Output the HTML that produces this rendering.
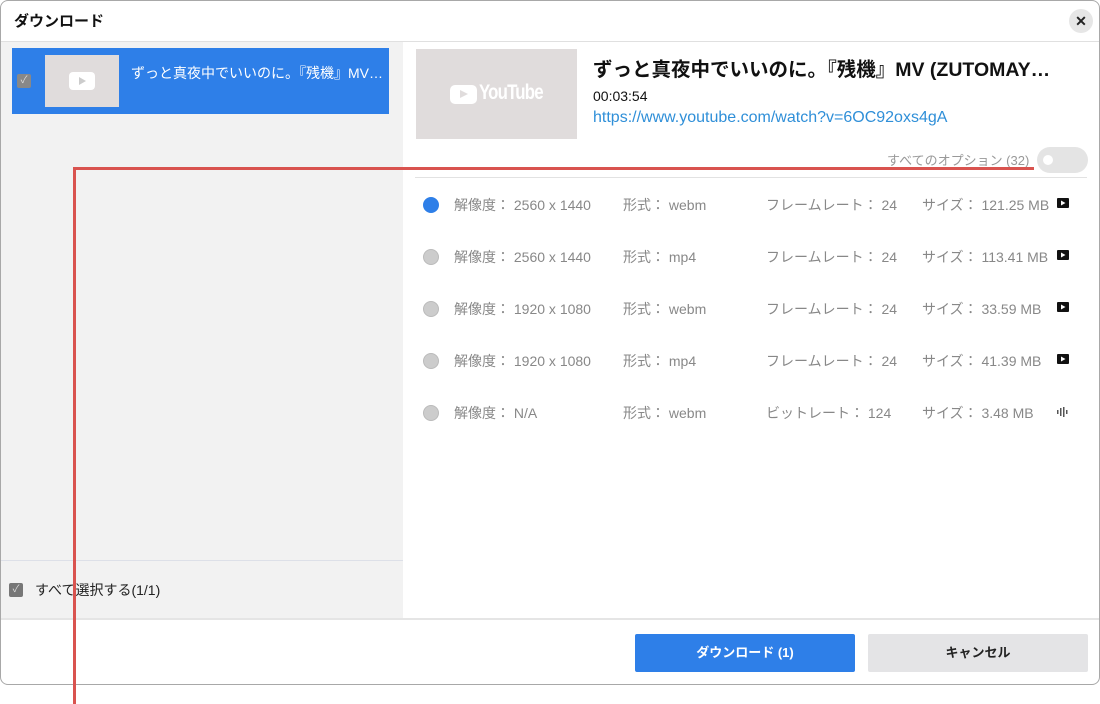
<!DOCTYPE html>
<html><head><meta charset="utf-8"><style>
*{margin:0;padding:0;box-sizing:border-box}
body{width:1100px;height:704px;background:#fff;position:relative;overflow:hidden;font-family:"Liberation Sans","Noto Sans CJK JP",sans-serif}
.win{position:absolute;left:0;top:0;width:1100px;height:685px;border:1px solid #a8a8a8;border-radius:8px;overflow:hidden;background:#fff}
.title{position:absolute;left:13px;top:9px;font-size:15px;font-weight:bold;color:#111}
.close{position:absolute;left:1068px;top:8px;width:24px;height:24px;border-radius:12px;background:#e6e6e6;text-align:center;line-height:24px;font-size:14px;font-weight:bold;color:#222}
.left{position:absolute;left:0;top:40px;width:402px;height:578px;background:#f2f2f2;border-top:1px solid #e0e0e0}
.sel{position:absolute;left:11px;top:6px;width:377px;height:66px;background:#2e7fe8}
.cb{position:absolute;width:14px;height:14px;border-radius:2px;background:#777;color:#ddd;font-size:10px;text-align:center;line-height:14px}
.thumb{position:absolute;left:33px;top:7px;width:74px;height:52px;background:#e0dcdc}
.right-div{position:absolute;left:402px;top:617px;width:698px;height:2px;background:#e5e5e5}
.row{position:absolute;left:0;font-size:14px;color:#888;height:20px}
.row span{position:absolute;white-space:nowrap;top:0}
.radio{position:absolute;left:422px;width:16px;height:16px;border-radius:8px;background:#ccc;border:1px solid #bbb}
.btn{position:absolute;top:633px;width:220px;height:38px;font-size:13px;font-weight:bold;text-align:center;line-height:38px;border-radius:2px}
</style></head><body>
<div class="win">
<div class="title">ダウンロード</div>
<div class="close">✕</div>
<div class="left">
 <div class="sel">
  <div class="cb" style="left:5px;top:26px;background:#888">✓</div>
  <div class="thumb"><div style="position:absolute;left:24px;top:17px;width:26px;height:18px;background:#fff;border-radius:4px"><div style="position:absolute;left:10px;top:5px;border-left:7px solid #ccc;border-top:4px solid transparent;border-bottom:4px solid transparent"></div></div></div>
  <div style="position:absolute;left:119px;top:15px;color:#fff;font-size:14px;white-space:nowrap">ずっと真夜中でいいのに。『残機』MV…</div>
 </div>
 <div style="position:absolute;left:0;top:518px;width:402px;height:1px;background:#dde0e8"></div>
 <div class="cb" style="left:8px;top:541px">✓</div>
 <div style="position:absolute;left:34px;top:538px;font-size:14px;color:#222">すべて選択する(1/1)</div>
</div>
<div style="position:absolute;left:402px;top:40px;width:698px;height:1px;background:#e0e0e0"></div>
<div style="position:absolute;left:415px;top:48px;width:161px;height:90px;background:#e0dcdc">
 <div style="position:absolute;left:34px;top:36px;width:27px;height:19px;background:#fff;border-radius:5px"><div style="position:absolute;left:10px;top:5px;border-left:8px solid #e0dcdc;border-top:4.5px solid transparent;border-bottom:4.5px solid transparent"></div></div>
 <div style="position:absolute;left:63px;top:32px;color:#fff;font-size:21px;font-weight:bold;letter-spacing:-1px;transform:scaleX(.8);transform-origin:left">YouTube</div>
</div>
<div style="position:absolute;left:592px;top:52px;font-size:19.5px;font-weight:bold;color:#111;white-space:nowrap">ずっと真夜中でいいのに。『残機』MV (ZUTOMAY…</div>
<div style="position:absolute;left:592px;top:87px;font-size:14px;color:#111">00:03:54</div>
<div style="position:absolute;left:592px;top:108px;font-size:16px;color:#2f8fd8">https://www.youtube.com/watch?v=6OC92oxs4gA</div>
<div style="position:absolute;left:886px;top:149px;font-size:13px;color:#999">すべてのオプション (32)</div>
<div style="position:absolute;left:1036px;top:146px;width:51px;height:26px;border-radius:13px;background:#e4e4e4"><div style="position:absolute;left:6px;top:8px;width:10px;height:10px;border-radius:5px;background:#fff"></div></div>
<div style="position:absolute;left:414px;top:176px;width:672px;height:1px;background:#e2e2e2"></div>

<div class="radio" style="top:196px;background:#2e7fe8;border-color:#2e7fe8"></div>
<div class="row" style="top:194px"><span style="left:453px">解像度： 2560 x 1440</span><span style="left:622px">形式： webm</span><span style="left:765px">フレームレート： 24</span><span style="left:921px">サイズ： 121.25 MB</span></div>
<div class="radio" style="top:248px"></div>
<div class="row" style="top:246px"><span style="left:453px">解像度： 2560 x 1440</span><span style="left:622px">形式： mp4</span><span style="left:765px">フレームレート： 24</span><span style="left:921px">サイズ： 113.41 MB</span></div>
<div class="radio" style="top:300px"></div>
<div class="row" style="top:298px"><span style="left:453px">解像度： 1920 x 1080</span><span style="left:622px">形式： webm</span><span style="left:765px">フレームレート： 24</span><span style="left:921px">サイズ： 33.59 MB</span></div>
<div class="radio" style="top:352px"></div>
<div class="row" style="top:350px"><span style="left:453px">解像度： 1920 x 1080</span><span style="left:622px">形式： mp4</span><span style="left:765px">フレームレート： 24</span><span style="left:921px">サイズ： 41.39 MB</span></div>
<div class="radio" style="top:404px"></div>
<div class="row" style="top:402px"><span style="left:453px">解像度： N/A</span><span style="left:622px">形式： webm</span><span style="left:765px">ビットレート： 124</span><span style="left:921px">サイズ： 3.48 MB</span></div>
<svg style="position:absolute;left:1055px;top:197px" width="14" height="170" viewBox="0 0 14 170">
 <g fill="#111"><rect x="1" y="0" width="12" height="10" rx="1"/><rect x="1" y="52" width="12" height="10" rx="1"/><rect x="1" y="104" width="12" height="10" rx="1"/><rect x="1" y="156" width="12" height="10" rx="1"/></g>
 <g fill="#fff"><path d="M5 2.5L9.5 5L5 7.5Z"/><path d="M5 54.5L9.5 57L5 59.5Z"/><path d="M5 106.5L9.5 109L5 111.5Z"/><path d="M5 158.5L9.5 161L5 163.5Z"/></g>
</svg>
<svg style="position:absolute;left:1055px;top:406px" width="14" height="10"><g fill="#555"><rect x="1" y="3" width="1.5" height="4"/><rect x="4" y="1" width="1.5" height="8"/><rect x="7" y="0" width="1.5" height="10"/><rect x="10" y="3" width="1.5" height="4"/></g></svg>

<div class="right-div" style="left:0;width:1100px"></div>
<div class="btn" style="left:634px;background:#2e7fe8;color:#fff">ダウンロード (1)</div>
<div class="btn" style="left:867px;background:#e4e4e6;color:#222">キャンセル</div>
</div>
<div style="position:absolute;left:73px;top:167px;width:961px;height:3px;background:#d9534f"></div>
<div style="position:absolute;left:73px;top:167px;width:3px;height:537px;background:#d9534f"></div>
</body></html>
